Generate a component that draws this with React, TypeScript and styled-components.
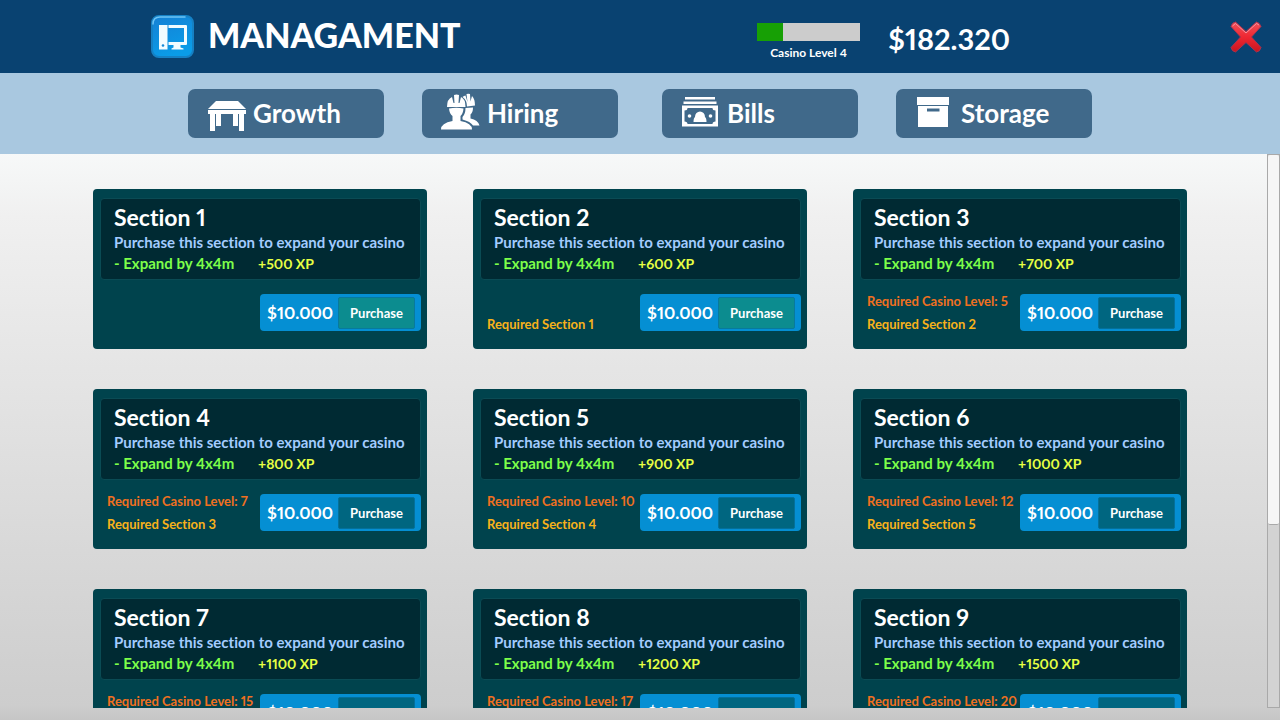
import React, { useState } from "react";
import styled, { createGlobalStyle } from "styled-components";

const GlobalStyle = createGlobalStyle`
  *, *::before, *::after { box-sizing: border-box; }
  body {
    margin: 0;
    font-family: Lato, "Open Sans", sans-serif;
    font-weight: 700;
    font-variant-ligatures: none;
    font-variant-numeric: proportional-nums;
    color: #ffffff;
  }
  h1, h2, p { margin: 0; }
  button { font: inherit; font-variant-ligatures: none; color: inherit; cursor: pointer; }
`;

const Page = styled.div`
  display: flex;
  flex-direction: column;
  height: 100vh;
  background: linear-gradient(#f7f9f9 21%, #f0f0f0 30%, #cdcdcd 98%, #c6c6c6);
`;

const Header = styled.header`
  display: flex;
  align-items: center;
  flex: none;
  height: 73px;
  padding: 0 18px 0 151px;
  background: #094271;
`;

const Brand = styled.div`
  display: flex;
  align-items: center;
  gap: 14px;
`;

const Title = styled.h1`
  padding-bottom: 4px;
  font-size: 34px;
  line-height: 40px;
  font-weight: 900;
`;

const Status = styled.div`
  display: flex;
  align-items: center;
  gap: 28px;
  margin: 0 216px 0 auto;
`;

const Level = styled.div`
  width: 103px;
  padding-top: 10px;
  text-align: center;
  font-size: 12px;
  line-height: 16px;
`;

const LevelTrack = styled.div`
  height: 18px;
  margin-bottom: 4px;
  background: #cccccc;
`;

const LevelFill = styled.div`
  height: 100%;
  background: #17a005;
`;

const Money = styled.div`
  width: 126px;
  padding-top: 4px;
  font-size: 29px;
  line-height: 36px;
  white-space: nowrap;
`;

const CloseButton = styled.button`
  display: flex;
  padding: 0;
  border: 0;
  background: none;
`;

const Nav = styled.nav`
  display: flex;
  justify-content: center;
  gap: 44px;
  flex: none;
  padding: 16px 0;
  background: #a9c8e0;
`;

const NavPair = styled.div`
  display: flex;
  gap: 38px;
`;

const NavButton = styled.button`
  display: flex;
  align-items: center;
  gap: 6px;
  width: 196px;
  height: 49px;
  padding: 0 0 2px 19px;
  border: 0;
  border-radius: 7px;
  background: #40698a;
  font-size: 26px;
  line-height: 32px;
`;

const NavIcon = styled.svg`
  flex: none;
  width: 40px;
  height: 38px;
  overflow: visible;
  fill: #ffffff;
`;

const Body = styled.main`
  display: flex;
  flex: 1;
  min-height: 0;
  padding-bottom: 12px;
`;

const SectionList = styled.div`
  flex: 1;
  display: grid;
  grid-template-columns: repeat(3, minmax(0, 1fr));
  align-content: start;
  gap: 40px 46px;
  padding: 35px 80px 40px 93px;
  overflow-y: auto;
  scrollbar-width: none;
`;

const ScrollTrack = styled.div`
  width: 13px;
  border: 1px solid #a9a9a9;
  background: #d3d3d3;
`;

const ScrollThumb = styled.div`
  height: 67%;
  border-bottom: 1px solid #a9a9a9;
  border-radius: 2px;
  background: #f6f6f6;
`;

const Card = styled.article`
  padding: 9px 6px 18px 7px;
  border-radius: 4px;
  background: #00434d;
`;

const Info = styled.div`
  height: 82px;
  padding: 4px 0 0 13px;
  border: 1px solid #0a4b54;
  border-radius: 4px;
  background: #002a33;
  white-space: nowrap;
`;

const SectionTitle = styled.h2`
  font-size: 23px;
  line-height: 28px;
`;

const Description = styled.p`
  color: #a3ccff;
  font-size: 15px;
  line-height: 22px;
`;

const Rewards = styled.p`
  display: flex;
  color: #7dff4a;
  font-size: 15px;
  line-height: 21px;
`;

const Expand = styled.span`
  width: 144px;
`;

const Experience = styled.span`
  color: #e6ff43;
  font-size: 14px;
`;

const Footer = styled.div`
  display: flex;
  align-items: center;
  justify-content: space-between;
  margin-top: 14px;
  height: 37px;
`;

const Requirements = styled.div`
  display: flex;
  flex-direction: column;
  justify-content: flex-end;
  height: 46px;
  padding-left: 7px;
  color: #f7b21a;
  font-size: 13px;
  line-height: 23px;
  white-space: nowrap;
`;

const LevelRequirement = styled.span`
  color: #f0701f;
`;

const Price = styled.div`
  display: flex;
  align-items: center;
  justify-content: space-between;
  flex: none;
  margin-left: auto;
  width: 161px;
  height: 37px;
  padding: 0 6px 0 7px;
  border-radius: 4px;
  background: #058fd3;
  font-size: 17px;
`;

const PurchaseButton = styled.button<{ $locked: boolean }>`
  width: 77px;
  height: 32px;
  padding: 0;
  border: 1px solid ${(p) => (p.$locked ? "#04709a" : "#077a9c")};
  border-radius: 2px;
  background: ${(p) => (p.$locked ? "#006680" : "#0c8c8f")};
  color: #ffffff;
  font-size: 13px;
`;

type Section = { id: number; xp: number; level?: number };

const sections: Section[] = [
  { id: 1, xp: 500 },
  { id: 2, xp: 600 },
  { id: 3, xp: 700, level: 5 },
  { id: 4, xp: 800, level: 7 },
  { id: 5, xp: 900, level: 10 },
  { id: 6, xp: 1000, level: 12 },
  { id: 7, xp: 1100, level: 15 },
  { id: 8, xp: 1200, level: 17 },
  { id: 9, xp: 1500, level: 20 },
];

const ComputerLogo = () => (
  <svg width="43" height="43" viewBox="0 0 43 43" aria-hidden="true">
    <defs>
      <linearGradient id="tile" x1="0" y1="0" x2="0.4" y2="1">
        <stop offset="0" stopColor="#1580d4" />
        <stop offset="1" stopColor="#0a9ce8" />
      </linearGradient>
    </defs>
    <rect x="1" y="1" width="41" height="41" rx="7" fill="url(#tile)" stroke="#1581c5" strokeWidth="2" />
    <path d="M2 9Q2 2 9 2H34" fill="none" stroke="#6cc3f5" strokeWidth="1.5" strokeLinecap="round" />
    <path
      fill="#f2fcff"
      d="M8 10h8.500v24.500H8zM17.500 10H35q1 0 1 1v18q0 1-1 1H17.500v-3H33V13H17.500zM22.500 30h7v2.500l3 1v1h-12v-1l2-1z"
    />
    <circle cx="12" cy="30.500" r="1.300" fill="#1689d6" />
  </svg>
);

const CloseIcon = () => (
  <svg width="32" height="32" viewBox="0 0 32 32" aria-hidden="true">
    <defs>
      <linearGradient id="cross" x1="0" y1="0" x2="0" y2="1">
        <stop offset="0" stopColor="#f0525a" />
        <stop offset="0.5" stopColor="#ee2732" />
        <stop offset="1" stopColor="#c9151f" />
      </linearGradient>
    </defs>
    <path
      d="M5.500 1 16 10.500 26.500 1Q29.500 1.500 31 5.500L21.500 16 31 26.500Q30 30.500 26.500 31L16 21.500 5.500 31Q2 30.500 1 26.500L10.500 16 1 5.500Q2 1.500 5.500 1Z"
      fill="url(#cross)"
      stroke="#a8334f"
      strokeWidth="1"
      strokeLinejoin="round"
    />
    <path d="M2.500 5 5.500 2.500 16 12 26.500 2.500 29 4" fill="none" stroke="#f593a0" strokeWidth="1" />
  </svg>
);

const TableIcon = () => (
  <NavIcon viewBox="0 0 40 38" aria-hidden="true">
    <path d="M9 7H31L39 15H1ZM1 16H39V20H1ZM3 20H8V37H3ZM32 20H37V37H32ZM9 20H14V32H9ZM26 20H31V32H26Z" />
  </NavIcon>
);

const WorkersIcon = () => (
  <NavIcon viewBox="0 0 40 38" aria-hidden="true">
    <path d="M6 13Q6 5 11 3L12.500 9H13.500L13 1Q15.500 0 18 1L17.500 9H18.500L20 3Q24.500 5 24.500 13Z" />
    <path d="M8 14.500Q15.500 13 22.500 14.500Q22 20 19.500 22V27Q31 29 31 35.500H0Q0 29 11.500 27V22Q8.500 20 8 14.500Z" />
    <path d="M21.500 3Q23 1.500 24.500 1.500L26.500 8 25.500 0Q27.500-.5 29 0L29.500 7.500 31 2Q34 5 34 11.500L26 12.500Q26 6 21.500 3ZM24.500 14 32 13.500Q32 18.500 29.500 20.500V24.500Q37 26 38.500 31.500H32Q29.500 27.500 21.500 25.500V23Q24.500 20 24.500 14Z" />
  </NavIcon>
);

const BillsIcon = () => (
  <NavIcon viewBox="0 0 40 38" aria-hidden="true">
    <path d="M4 3H34V5.500H4ZM2.500 7.500H35.500V10H2.500Z" />
    <path
      fillRule="evenodd"
      d="M1 11.500H37V32.500H1ZM6.500 14Q6.500 16.500 3.500 16.500V27.500Q6.500 27.500 6.500 30H31.500Q31.500 27.500 34.500 27.500V16.500Q31.500 16.500 31.500 14Z"
    />
    <path d="M12.500 28Q12.500 24 14 23A5 5.500 0 0 1 24 23Q25.500 24 25.500 28Z" />
    <circle cx="8.500" cy="22" r="1.800" />
    <circle cx="29.500" cy="22" r="1.800" />
  </NavIcon>
);

const BoxIcon = () => (
  <NavIcon viewBox="0 0 40 38" aria-hidden="true">
    <path fillRule="evenodd" d="M2 3H34V11H2ZM3 12H33V33H3ZM12 14.500V17.500H24.500V14.500Z" />
  </NavIcon>
);

function SectionCard({ id, xp, level }: Section) {
  return (
    <Card>
      <Info>
        <SectionTitle>Section {id}</SectionTitle>
        <Description>Purchase this section to expand your casino</Description>
        <Rewards>
          <Expand>- Expand by 4x4m</Expand>
          <Experience>+{xp} XP</Experience>
        </Rewards>
      </Info>
      <Footer>
        <Requirements>
          {level && <LevelRequirement>Required Casino Level: {level}</LevelRequirement>}
          {id > 1 && <span>Required Section {id - 1}</span>}
        </Requirements>
        <Price>
          <span>$10.000</span>
          <PurchaseButton type="button" $locked={level !== undefined}>
            Purchase
          </PurchaseButton>
        </Price>
      </Footer>
    </Card>
  );
}

export default function App() {
  const [progress, setProgress] = useState(0);
  const onScroll = (e: React.UIEvent<HTMLDivElement>) => {
    const el = e.currentTarget;
    setProgress(el.scrollTop / Math.max(1, el.scrollHeight - el.clientHeight));
  };

  return (
    <Page>
      <GlobalStyle />
      <Header>
        <Brand>
          <ComputerLogo />
          <Title>MANAGAMENT</Title>
        </Brand>
        <Status>
          <Level>
            <LevelTrack>
              <LevelFill style={{ width: "25%" }} />
            </LevelTrack>
            Casino Level 4
          </Level>
          <Money>$182.320</Money>
        </Status>
        <CloseButton type="button" aria-label="Close">
          <CloseIcon />
        </CloseButton>
      </Header>
      <Nav>
        <NavPair>
          <NavButton type="button"><TableIcon />Growth</NavButton>
          <NavButton type="button"><WorkersIcon />Hiring</NavButton>
        </NavPair>
        <NavPair>
          <NavButton type="button"><BillsIcon />Bills</NavButton>
          <NavButton type="button"><BoxIcon />Storage</NavButton>
        </NavPair>
      </Nav>
      <Body>
        <SectionList onScroll={onScroll}>
          {sections.map((s) => (
            <SectionCard key={s.id} {...s} />
          ))}
        </SectionList>
        <ScrollTrack>
          <ScrollThumb style={{ transform: `translateY(${progress * 49}%)` }} />
        </ScrollTrack>
      </Body>
    </Page>
  );
}
